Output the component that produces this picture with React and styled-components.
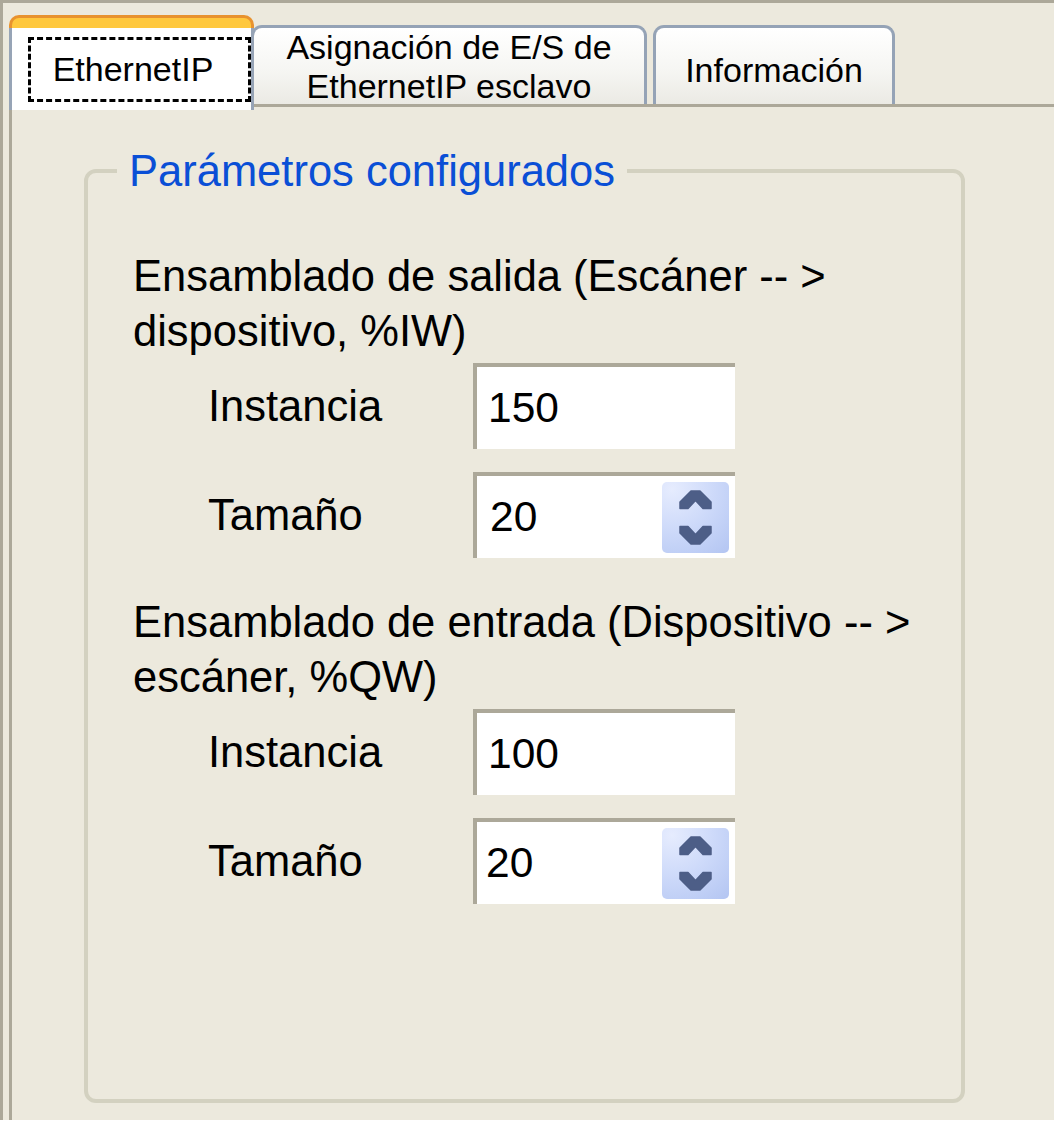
import React from "react";
import styled, { createGlobalStyle } from "styled-components";

const GlobalStyle = createGlobalStyle`
  body {
    margin: 0;
    background: #ffffff;
    font-family: "Liberation Sans", Arial, sans-serif;
  }
`;

const Frame = styled.div`
  width: 1054px;
  height: 1120px;
  box-sizing: border-box;
  border-top: 3px solid #aca899;
  border-left: 3px solid #aca899;
  background: #ece9dd;
  padding-left: 6px;
  display: flex;
  flex-direction: column;
  color: #000;
`;

const TabStrip = styled.div`
  display: flex;
  align-items: flex-end;
  padding-top: 12px;
  position: relative;
  z-index: 1;
`;

const ActiveTab = styled.div`
  width: 245px;
  height: 95px;
  margin-bottom: -6px;
  display: flex;
  flex-direction: column;
  position: relative;
  z-index: 2;
`;

const Band = styled.div`
  height: 13px;
  box-sizing: border-box;
  background: #ffc83d;
  border: 3px solid #e8922e;
  border-bottom: 0;
  border-radius: 10px 10px 0 0;
`;

const ActiveBody = styled.div`
  flex: 1;
  display: flex;
  background: #ffffff;
  border-left: 3px solid #97a4b6;
  border-right: 3px solid #97a4b6;
  padding: 9px 0 8px 16px;
`;

const FocusRect = styled.div`
  flex: 1;
  display: flex;
  align-items: center;
  justify-content: center;
  padding-right: 13px;
  border: 3px dashed #000;
  font-size: 34px;
`;

const Tab = styled.div`
  width: ${(p) => p.$w}px;
  height: 79px;
  box-sizing: border-box;
  margin-left: ${(p) => p.$gap}px;
  border: 3px solid #95a3b6;
  border-bottom: 0;
  border-radius: 11px 11px 0 0;
  background: linear-gradient(#ffffff 0%, #f6f6f3 55%, #ebeae4 100%);
  font-size: 34px;
  line-height: 39px;
  text-align: center;
  overflow: hidden;
  display: flex;
  flex-direction: column;
  justify-content: ${(p) => (p.$single ? "center" : "flex-start")};
  padding-top: ${(p) => (p.$single ? 9 : 0)}px;
`;

const Panel = styled.div`
  flex: 1;
  display: flex;
  flex-direction: column;
  border-top: 3px solid #aca899;
  border-left: 3px solid #aca899;
  min-height: 0;
`;

const Group = styled.fieldset`
  flex: 1;
  width: 881px;
  box-sizing: border-box;
  margin: 39px 0 17px 72px;
  padding: 0;
  border: 4px solid #d3d1c0;
  border-radius: 12px;
  min-width: 0;
`;

const Legend = styled.legend`
  margin-left: 29px;
  padding: 0 12px;
  font-size: 43.5px;
  line-height: 50px;
  color: #0a4fd6;
`;

const Content = styled.div`
  padding: 53px 0 0 45px;
`;

const Heading = styled.div`
  font-size: 43.5px;
  line-height: 55px;
  margin-top: ${(p) => p.$top || 0}px;
`;

const Row = styled.div`
  display: flex;
  align-items: center;
  padding-left: 75px;
  margin-top: ${(p) => p.$top}px;
`;

const Label = styled.div`
  width: 265px;
  font-size: 43.5px;
`;

const Field = styled.div`
  width: 262px;
  height: 86px;
  box-sizing: border-box;
  background: #ffffff;
  border-top: 4px solid #aca899;
  border-left: 4px solid #aca899;
  display: flex;
  align-items: center;
  justify-content: space-between;
  padding: 0 6px 0 ${(p) => p.$pad || 8}px;
  font-size: 42.5px;
`;

const SpinButton = styled.div`
  width: 67px;
  height: 71px;
  border-radius: 5px;
  background: radial-gradient(circle at 15% 10%, #e6ecfe 0%, #cfdbfa 45%, #b3c5f2 100%);
  display: flex;
`;

const Spinner = () => (
  <SpinButton>
    <svg width="67" height="71" viewBox="0 0 67 71">
      <g fill="#4d5e87" stroke="#4d5e87" strokeWidth="1.5" strokeLinejoin="round">
        <polygon points="18,26.5 18,20 29,9 38,9 49,20 49,26.5 41,26.5 33.5,18.5 26,26.5" />
        <polygon points="18,44.5 26,44.5 33.5,52.5 41,44.5 49,44.5 49,51 38,62 29,62 18,51" />
      </g>
    </svg>
  </SpinButton>
);

const FieldRow = ({ label, value, spin, top, pad }) => (
  <Row $top={top}>
    <Label>{label}</Label>
    <Field $pad={pad}>
      <span>{value}</span>
      {spin && <Spinner />}
    </Field>
  </Row>
);

export default function App() {
  return (
    <>
      <GlobalStyle />
      <Frame>
        <TabStrip>
          <ActiveTab>
            <Band />
            <ActiveBody>
              <FocusRect>EthernetIP</FocusRect>
            </ActiveBody>
          </ActiveTab>
          <Tab $w={396} $gap={-3}>
            <div>Asignación de E/S de</div>
            <div>EthernetIP esclavo</div>
          </Tab>
          <Tab $w={242} $gap={6} $single>
            Información
          </Tab>
        </TabStrip>
        <Panel>
          <Group>
            <Legend>Parámetros configurados</Legend>
            <Content>
              <Heading>
                Ensamblado de salida (Escáner -- &gt;
                <br />
                dispositivo, %IW)
              </Heading>
              <FieldRow label="Instancia" value="150" top={4} pad={11} />
              <FieldRow label="Tamaño" value="20" spin top={23} pad={13} />
              <Heading $top={37}>
                Ensamblado de entrada (Dispositivo -- &gt;
                <br />
                escáner, %QW)
              </Heading>
              <FieldRow label="Instancia" value="100" top={4} pad={11} />
              <FieldRow label="Tamaño" value="20" spin top={23} pad={9} />
            </Content>
          </Group>
        </Panel>
      </Frame>
    </>
  );
}
